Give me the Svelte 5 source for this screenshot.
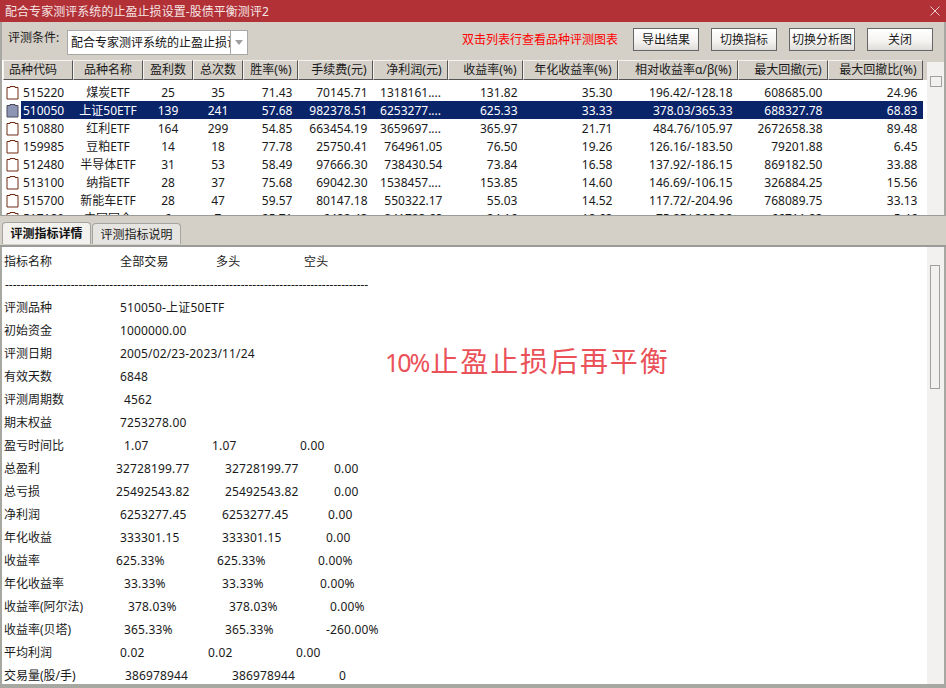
<script>
  const columns = [
    { t: '品种代码', a: 'first' }, { t: '品种名称', a: 'c' }, { t: '盈利数', a: 'c' }, { t: '总次数', a: 'c' },
    { t: '胜率(%)', a: 'r' }, { t: '手续费(元)', a: 'r' }, { t: '净利润(元)', a: 'r' }, { t: '收益率(%)', a: 'r' },
    { t: '年化收益率(%)', a: 'r' }, { t: '相对收益率α/β(%)', a: 'r' }, { t: '最大回撤(元)', a: 'r' }, { t: '最大回撤比(%)', a: 'r' }
  ];
  const rows = [
    ['515220', '煤炭ETF', '25', '35', '71.43', '70145.71', '1318161....', '131.82', '35.30', '196.42/-128.18', '608685.00', '24.96'],
    ['510050', '上证50ETF', '139', '241', '57.68', '982378.51', '6253277....', '625.33', '33.33', '378.03/365.33', '688327.78', '68.83'],
    ['510880', '红利ETF', '164', '299', '54.85', '663454.19', '3659697....', '365.97', '21.71', '484.76/105.97', '2672658.38', '89.48'],
    ['159985', '豆粕ETF', '14', '18', '77.78', '25750.41', '764961.05', '76.50', '19.26', '126.16/-183.50', '79201.88', '6.45'],
    ['512480', '半导体ETF', '31', '53', '58.49', '97666.30', '738430.54', '73.84', '16.58', '137.92/-186.15', '869182.50', '33.88'],
    ['513100', '纳指ETF', '28', '37', '75.68', '69042.30', '1538457....', '153.85', '14.60', '146.69/-106.15', '326884.25', '15.56'],
    ['515700', '新能车ETF', '28', '47', '59.57', '80147.18', '550322.17', '55.03', '14.52', '117.72/-204.96', '768089.75', '33.13'],
    ['517180', '中国国企', '6', '7', '85.71', '6482.43', '241723.68', '24.16', '12.62', '75.85/-305.38', '66711.83', '5.46']
  ];
  const stats = [
    ['指标名称', [120, '全部交易'], [216, '多头'], [304, '空头']],
    ['', ],
    ['评测品种', [120, '510050-上证50ETF']],
    ['初始资金', [120, '1000000.00']],
    ['评测日期', [120, '2005/02/23-2023/11/24']],
    ['有效天数', [120, '6848']],
    ['评测周期数', [124, '4562']],
    ['期末权益', [120, '7253278.00']],
    ['盈亏时间比', [124, '1.07'], [212, '1.07'], [300, '0.00']],
    ['总盈利', [116, '32728199.77'], [225, '32728199.77'], [334, '0.00']],
    ['总亏损', [116, '25492543.82'], [225, '25492543.82'], [334, '0.00']],
    ['净利润', [120, '6253277.45'], [222, '6253277.45'], [328, '0.00']],
    ['年化收益', [120, '333301.15'], [222, '333301.15'], [326, '0.00']],
    ['收益率', [116, '625.33%'], [217, '625.33%'], [318, '0.00%']],
    ['年化收益率', [124, '33.33%'], [222, '33.33%'], [320, '0.00%']],
    ['收益率(阿尔法)', [128, '378.03%'], [229, '378.03%'], [330, '0.00%']],
    ['收益率(贝塔)', [124, '365.33%'], [225, '365.33%'], [326, '-260.00%']],
    ['平均利润', [120, '0.02'], [208, '0.02'], [296, '0.00']],
    ['交易量(股/手)', [125, '386978944'], [232, '386978944'], [339, '0']]
  ];
  const dashes = '-'.repeat(94);
  const align = (i) => (i === 0 ? 'first' : i < 4 ? 'c' : 'r');
</script>

<div class="window">
  <header class="title">
    <span class="title-text">配合专家测评系统的止盈止损设置-股债平衡测评2</span>
    <svg class="close" width="10" height="10" viewBox="0 0 10 10"><path d="M0.5 0.5L9.5 9.5M9.5 0.5L0.5 9.5" stroke="#eccfd0" stroke-width="1" fill="none" /></svg>
  </header>

  <div class="toolbar">
    <span class="label">评测条件:</span>
    <div class="combo">
      <span class="combo-text">配合专家测评系统的止盈止损设置</span>
      <span class="combo-btn"><svg width="8" height="5" viewBox="0 0 8 5"><path d="M0 0H8L4 5Z" fill="#a0a0a0" /></svg></span>
    </div>
    <span class="hint">双击列表行查看品种评测图表</span>
    <div class="buttons">
      <button>导出结果</button>
      <button>切换指标</button>
      <button>切换分析图</button>
      <button>关闭</button>
    </div>
  </div>

  <section class="list">
    <div class="list-main">
      <div class="grid head">
        {#each columns as c}
          <div class="hcell {c.a}">{c.t}</div>
        {/each}
      </div>
      <div class="body">
        {#each rows as r, ri}
          <div class="grid row" class:sel={ri === 1}>
            {#each r as v, i}
              <div class="cell {align(i)}" class:elided={v.endsWith('....')}>
                {#if i === 0}
                  <svg class="doc" width="13" height="15" viewBox="0 0 13 15">
                    <path d="M1 2.5H4V1.5H9V2.5H12V14H1Z" fill={ri === 1 ? '#8d95b5' : '#fff'} stroke={ri === 1 ? '#4a4a5a' : '#6e2c12'} stroke-width="1" />
                  </svg>
                  <span class="code">{v}</span>
                {:else}
                  {v}
                {/if}
              </div>
            {/each}
          </div>
        {/each}
      </div>
    </div>
    <div class="vscroll top"><span class="thumb-small"></span></div>
  </section>

  <nav class="tabs">
    <div class="tab active">评测指标详情</div>
    <div class="tab">评测指标说明</div>
  </nav>

  <section class="detail">
    <div class="report">
      {#each stats as s, idx}
        <div class="line">
          {#if idx === 1}
            <span class="dash">{dashes}</span>
          {:else}
            <span class="lab" style="width:{(s[1] ? s[1][0] : 120) - 4}px">{s[0]}</span>
            {#each s.slice(1) as c, j}
              <span class="val" style="width:{s[j + 2] ? s[j + 2][0] - c[0] : 200}px">{c[1]}</span>
            {/each}
          {/if}
        </div>
      {/each}
      <div class="stamp"><span class="stamp-num">10%</span>止盈止损后再平衡</div>
    </div>
    <div class="vscroll"><span class="thumb"></span></div>
  </section>
</div>

<style>
  :global(body) { margin: 0; background: #d4d0c8; }
  .window {
    width: 946px;
    height: 688px;
    display: flex;
    flex-direction: column;
    overflow: hidden;
    background: #d4d0c8;
    font: 12px/18px "Noto Sans", "Noto Sans CJK SC", sans-serif;
    color: #1a1a1a;
    box-sizing: border-box;
    border-bottom: 4px solid #a8a8a2;
  }
  .title {
    height: 22px;
    flex: none;
    background: #b23137;
    color: #f4e4e4;
    display: flex;
    align-items: center;
    justify-content: space-between;
    padding: 0 6px 0 5px;
    box-sizing: border-box;
  }
  .title-text { letter-spacing: 0.05px; padding-top: 1px; }
  .toolbar {
    height: 36px;
    flex: none;
    display: flex;
    align-items: flex-start;
    padding: 0 13px 0 6px;
    box-sizing: border-box;
    border-left: 2px solid #a8a8a2;
    border-right: 2px solid #a8a8a2;
  }
  .label { width: 59px; flex: none; margin-top: 7px; }
  .combo {
    width: 181px;
    height: 25px;
    flex: none;
    display: flex;
    box-sizing: border-box;
    border: 1px solid #a8a8a8;
    background: #fff;
    margin-top: 8px;
  }
  .combo-text { flex: 1; overflow: hidden; white-space: nowrap; padding-left: 3px; line-height: 23px; color: #111; }
  .combo-btn { width: 16px; flex: none; border-left: 1px solid #a8a8a8; display: flex; align-items: center; justify-content: center; }
  .hint { margin: 9px 0 0 214px; flex: none; width: 171px; color: #f00; }
  .buttons { display: flex; gap: 12px; margin-top: 6px; }
  button {
    width: 66px;
    height: 23px;
    padding: 0;
    font: inherit;
    color: #1a1a1a;
    border: 1px solid #666;
    background: linear-gradient(#fff, #f4f3f1 60%, #dedcd8);
    white-space: nowrap;
  }

  .list {
    height: 158px;
    flex: none;
    display: flex;
    border-left: 2px solid #a8a8a2;
    border-right: 2px solid #a8a8a2;
    border-bottom: 1px solid #9b9b97;
    box-sizing: border-box;
    padding-top: 2px;
    background: #fff;
    box-shadow: inset 0 2px 0 #d4d0c8;
  }
  .list-main { flex: 1; min-width: 0; overflow: hidden; padding-left: 1px; }
  .grid {
    display: grid;
    grid-template-columns: 70px 70px 50px 50px 55px 75px 75px 75px 95px 120px 90px 95px;
    width: 925px;
  }
  .head { height: 21px; background: linear-gradient(#d4d0c8 20px, #fff 20px); }
  .hcell {
    height: 20px;
    box-sizing: border-box;
    background: #d4d0c8;
    border: 1px solid;
    border-color: #f4f3f0 #555 #555 #f4f3f0;
    line-height: 18px;
    padding-right: 5.5px;
    white-space: nowrap;
    overflow: hidden;
  }
  .hcell.first { padding-left: 5px; }
  .c { text-align: center; }
  .r { text-align: right; }
  .hcell.c { padding: 0; }
  .body { height: 134px; overflow: hidden; padding-top: 2px; box-sizing: border-box; }
  .row { height: 18px; line-height: 19px; }
  .cell { padding-right: 5.5px; white-space: nowrap; }
  .cell.c { padding-right: 0; }
  .cell.elided { padding-right: 7px; }
  .cell.first { padding: 0; display: flex; align-items: center; }
  .doc { margin-left: 3px; margin-right: 4px; flex: none; }
  .sel { color: #fff; background: linear-gradient(#0a246a, #0a246a) 18px 0 / 902px 100% no-repeat; }
  .vscroll {
    width: 17px;
    flex: none;
    background: #f3f1ef;
    box-sizing: border-box;
    padding: 0 3px;
  }
  .vscroll.top { padding: 16px 3px 0; background: linear-gradient(#d4d0c8 2px, #f3f1ef 2px); }
  .thumb-small { display: block; width: 10px; height: 9px; border: 1px solid #a0a0a0; }
  .thumb { display: block; width: 8px; height: 122px; margin-top: 18px; border: 1px solid #a0a0a0; }

  .tabs {
    height: 31px;
    flex: none;
    padding: 6px 0 0 2px;
    box-sizing: border-box;
    display: flex;
    gap: 1px;
    border-bottom: 2px solid #9b9b97;
  }
  .tab {
    width: 89px;
    height: 21px;
    box-sizing: border-box;
    border: 1px solid #a4a4a0;
    border-bottom: 0;
    border-radius: 4px 4px 0 0;
    background: #e6e4e0;
    text-align: center;
    line-height: 21px;
    margin-top: 1px;
  }
  .tab.active { background: #f3f1ee; font-weight: 700; height: 22px; margin-top: 0; color: #111; }

  .detail {
    flex: 1;
    min-height: 0;
    display: flex;
    overflow: hidden;
    background: #fff;
    border-left: 2px solid #a8a8a2;
    border-right: 2px solid #a8a8a2;
  }
  .report { flex: 1; min-width: 0; padding: 3px 0 0 2px; position: relative; overflow: hidden; }
  .line { height: 23px; line-height: 23px; display: flex; white-space: nowrap; }
  .lab, .val { flex: none; display: block; }
  .val { letter-spacing: 0.15px; }
  .dash { padding-left: 1px; }
  .stamp {
    position: absolute;
    left: 383px;
    top: 97px;
    font-size: 28px;
    line-height: 34px;
    letter-spacing: 1.9px;
    color: #ea5158;
    white-space: nowrap;
  }
  .stamp-num { font-size: 25px; letter-spacing: -2px; margin-right: 2px; }
</style>
